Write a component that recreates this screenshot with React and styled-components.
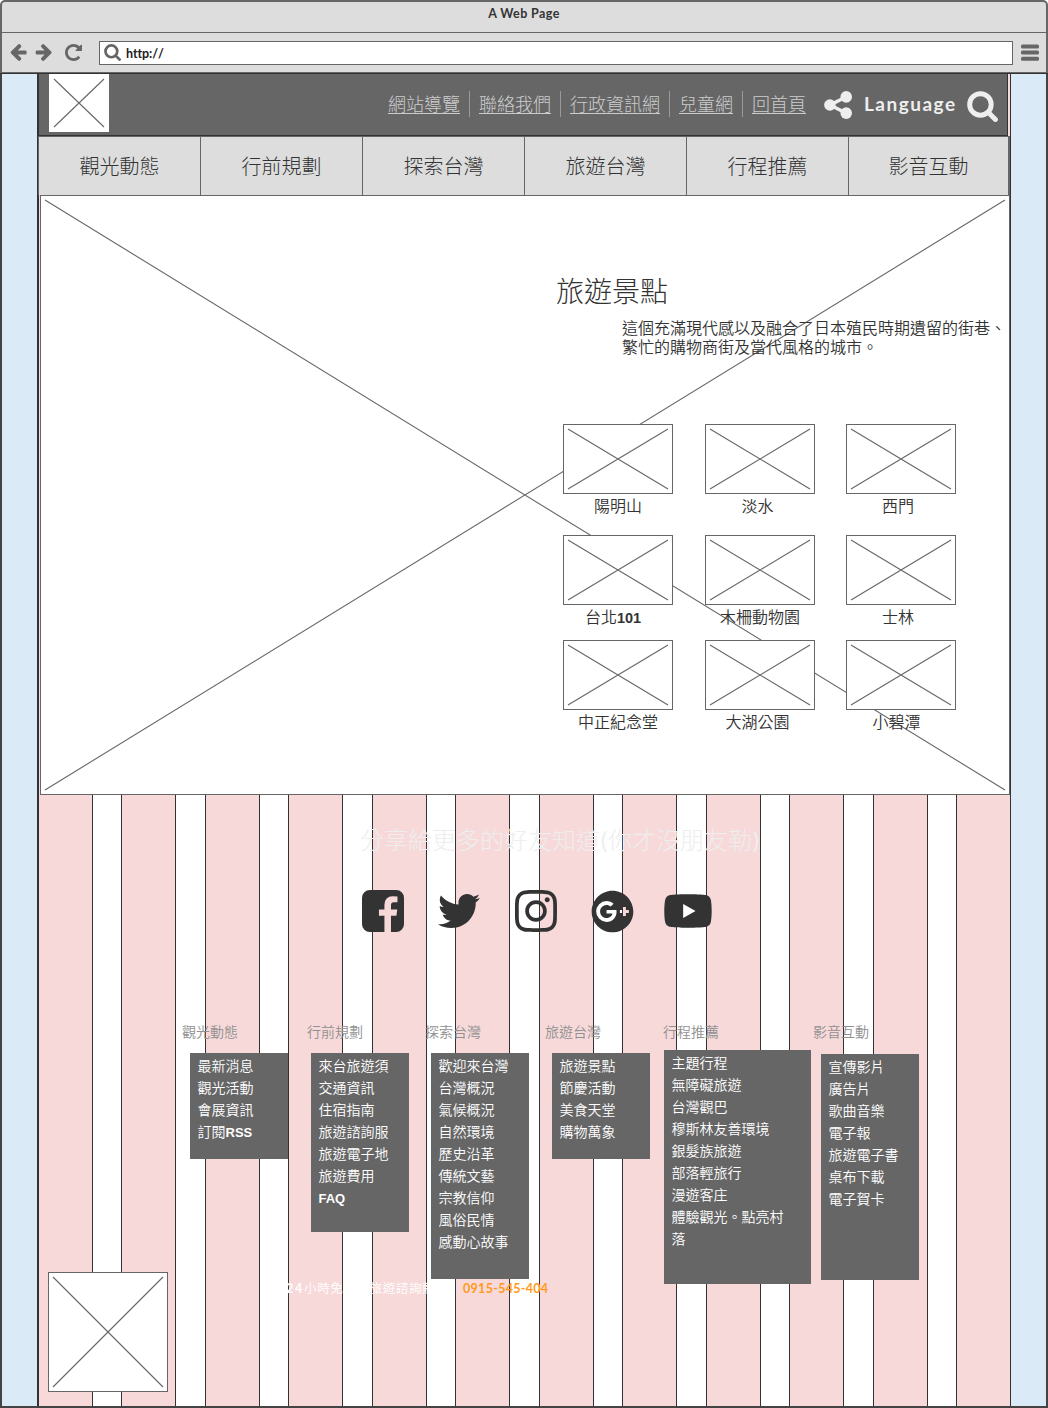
import React from 'react';
import styled, { createGlobalStyle } from 'styled-components';
import { FaTwitter, FaInstagram, FaGooglePlus, FaYoutube } from 'react-icons/fa';

const GlobalStyle = createGlobalStyle`
  * { box-sizing: border-box; }
  body {
    margin: 0;
    background: #fff;
    font-family: Lato, "Noto Sans CJK TC", sans-serif;
    font-weight: 300;
    color: #333;
  }
`;

const Window = styled.div`
  width: 1048px;
  height: 1408px;
  display: flex;
  flex-direction: column;
  overflow: hidden;
`;

const Chrome = styled.header`
  flex: none;
  height: 73px;
  background: #ddd;
  border: 2px solid #666;
  border-bottom-width: 1px;
  border-radius: 5px 5px 0 0;
`;

const TitleBar = styled.div`
  height: 31px;
  padding-top: 3px;
  border-bottom: 1px solid #666;
  text-align: center;
  font-size: 12.5px;
  line-height: 18px;
  font-weight: 700;
  letter-spacing: 0.4px;
`;

const Toolbar = styled.div`
  height: 39px;
  display: flex;
  align-items: center;
  padding: 0 7px 0 8px;
  color: #666;
`;

const ToolButton = styled.span`
  display: flex;
  margin-right: ${(p) => p.$after}px;
`;

const AddressBar = styled.div`
  flex: 1;
  height: 24px;
  display: flex;
  align-items: center;
  gap: 5px;
  padding-left: 4px;
  margin-right: 8px;
  background: #fff;
  border: 1px solid #666;
`;

const Address = styled.span`
  padding-top: 1px;
  color: #222;
  font-size: 12.5px;
  font-weight: 700;
  letter-spacing: -0.1px;
  font-kerning: none;
`;

const Viewport = styled.div`
  flex: 1;
  display: grid;
  grid-template-columns: 37px 974px 37px;
  border-top: 1px solid #333;
  border-bottom: 2px solid #444;
`;

const Gutter = styled.aside`
  background: #daeaf6;
  border-left: ${(p) => (p.$side === 'left' ? '2px solid #444' : '0')};
  border-right: ${(p) => (p.$side === 'right' ? '2px solid #444' : '0')};
`;

const Site = styled.div`
  display: grid;
  border-left: 2px solid #333;
`;

const Stripes = styled.div`
  grid-area: 1 / 1;
  display: flex;
  justify-content: space-between;
  margin-left: -1px;
`;

const Stripe = styled.i`
  width: 55px;
  background: #f7d9da;
  border: solid #333;
  border-width: 0 1px;
`;

const Page = styled.div`
  grid-area: 1 / 1;
  position: relative;
  display: flex;
  flex-direction: column;
`;

const Header = styled.div`
  height: 62px;
  width: 969px;
  flex: none;
  display: flex;
  padding-left: 10px;
  background: #666;
  border: solid #333;
  border-width: 0 1px 1px 0;
  color: #eee;
`;

const LinkList = styled.nav`
  display: flex;
  align-items: center;
  height: 26px;
  margin: 17px 0 0 270px;
  font-size: 18px;
`;

const TopLink = styled.a`
  padding: 0 9px;
  line-height: 27px;
  height: 26px;
  color: #ccc;
  text-decoration: underline;
  text-decoration-thickness: 1px;
  text-underline-offset: 2px;
  & + & {
    border-left: 1px solid #999;
  }
`;

const HeaderTools = styled.div`
  display: flex;
  align-items: flex-start;
  padding: 17px 0 0 9px;
  white-space: nowrap;
`;

const Language = styled.span`
  width: 115px;
  padding-left: 12px;
  font-size: 19px;
  line-height: 25px;
  font-weight: 700;
  letter-spacing: 1.5px;
`;

const MainNav = styled.nav`
  flex: none;
  height: 59px;
  width: 972px;
  margin-left: -1px;
  display: grid;
  grid-template-columns: repeat(6, 162px);
  border-top: 1px solid #666;
  background: #ddd;
`;

const NavItem = styled.a`
  border-left: 1px solid #666;
  text-align: center;
  font-size: 20px;
  line-height: 58px;
  &:last-child {
    border-right: 2px solid #666;
  }
`;

const HeroBox = styled.main`
  margin: 0 0 0 1px;
  flex: none;
  height: 600px;
`;

const Frame = styled.div`
  width: ${(p) => p.$w}px;
  height: ${(p) => p.$h}px;
  flex: none;
  display: grid;
  background: #fff;
  border: 1px solid ${(p) => p.$edge || '#666'};
`;

const Cross = styled.svg`
  grid-area: 1 / 1;
  display: block;
  margin: 4px;
  stroke: #666;
  stroke-width: 1.1;
  overflow: visible;
`;

const HeroContent = styled.div`
  grid-area: 1 / 1;
  position: relative;
  padding: 74px 0 0 515px;
`;

const HeroTitle = styled.h1`
  margin: 0;
  font-size: 28px;
  line-height: 42px;
  font-weight: 300;
`;

const HeroText = styled.p`
  margin: 6px 0 0 66px;
  width: 387px;
  font-size: 16px;
  line-height: 19px;
  font-weight: 350;
`;

const Spots = styled.div`
  display: grid;
  grid-template-columns: 142px 141px 110px;
  grid-template-rows: 111px 105px 100px;
  margin: 68px 0 0 7px;
`;

const Spot = styled.figure`
  width: 110px;
  margin: 0;
`;

const SpotName = styled.figcaption`
  padding-right: ${(p) => p.$shift * 2}px;
  text-align: center;
  font-size: 16px;
  line-height: 24px;
  font-weight: 350;
  b { font: 700 14.5px "Liberation Sans", sans-serif; }
`;

const ShareTitle = styled.h2`
  margin: 27px 0 0 321px;
  font-size: 24px;
  line-height: 36px;
  font-weight: 300;
  color: #eee;
  white-space: nowrap;
  b { font-weight: 400; padding: 0 0.8px; }
`;

const SocialRow = styled.div`
  display: flex;
  align-items: center;
  height: 48px;
  margin: 29px 0 0 320px;
  color: #333;
`;

const Social = styled.a`
  display: flex;
  justify-content: center;
  width: ${(p) => p.$w}px;
`;

const Sitemap = styled.div`
  display: grid;
  grid-template-columns: 125px 118px 120px 118px 150px 108px;
  height: 251px;
  flex: none;
  margin: 86px 0 0 143px;
`;

const GroupTitle = styled.h3`
  margin: 0;
  height: 22px;
  font-size: 14px;
  line-height: 22px;
  font-weight: 350;
  color: #909090;
`;

const LinkPanel = styled.ul`
  list-style: none;
  margin: ${(p) => p.$top}px 0 0 ${(p) => p.$left}px;
  padding: 2px 18px 0 7.5px;
  width: ${(p) => p.$w}px;
  height: ${(p) => p.$h}px;
  background: #666;
  color: #fff;
  font-size: 14px;
  line-height: 22px;
  font-weight: 350;
  b { font: 700 13px "Liberation Sans", sans-serif; }
`;

const BottomRow = styled.div`
  display: flex;
  align-items: flex-start;
  padding-left: 9px;
`;

const Hotline = styled.p`
  display: flex;
  margin: 7px 0 0 118px;
  color: #fff;
  font-size: 12.5px;
  line-height: 20px;
  letter-spacing: 0.6px;
  font-weight: 350;
  white-space: pre;
  b { font-weight: 700; letter-spacing: 1.8px; }
`;

const HotlineLabel = styled.span`
  width: 177px;
`;

const Phone = styled.span`
  color: #ff9a1a;
  font-weight: 700;
  letter-spacing: 0.3px;
`;

function Placeholder({ w, h, edge, children }) {
  const cw = w - 10;
  const ch = h - 10;
  return (
    <Frame $w={w} $h={h} $edge={edge}>
      <Cross width={cw} height={ch} viewBox={`0 0 ${cw} ${ch}`}>
        <path d={`M0 0L${cw} ${ch}M${cw} 0L0 ${ch}`} />
      </Cross>
      {children}
    </Frame>
  );
}

function SearchIcon({ size }) {
  return (
    <svg width={size} height={size} viewBox="0 0 30 30" fill="none" stroke="currentColor" strokeWidth="4.8" strokeLinecap="round">
      <circle cx="13" cy="13" r="10.4" />
      <path d="M20.5 20.5L27.5 27.5" />
    </svg>
  );
}

function ShareIcon() {
  return (
    <svg width="28" height="28" viewBox="0 0 28 28" fill="currentColor">
      <path d="M22 6L6 14L22 22" fill="none" stroke="currentColor" strokeWidth="3.6" />
      <circle cx="22.2" cy="5.9" r="5.8" />
      <circle cx="22.2" cy="22.1" r="5.8" />
      <circle cx="5.9" cy="14" r="5.8" />
    </svg>
  );
}

function MenuIcon() {
  return (
    <svg width="18" height="17" viewBox="0 0 18 17" fill="currentColor">
      <rect y="0.4" width="18" height="4" rx="1.5" />
      <rect y="6.6" width="18" height="4" rx="1.5" />
      <rect y="12.8" width="18" height="4" rx="1.5" />
    </svg>
  );
}

const arrowPath =
  'M1664 896v128q0 53-32.5 90.5t-84.5 37.5h-704l293 294q38 36 38 90t-38 90l-75 76q-37 37-90 37-52 0-91-37l-651-652q-37-37-37-90 0-52 37-91l651-650q38-38 91-38 52 0 90 38l75 74q38 38 38 91t-38 91l-293 293h704q52 0 84.5 37.5t32.5 90.5z';

function ArrowIcon({ forward }) {
  return (
    <svg width="17" height="17" viewBox="128 180 1572 1560" fill="currentColor">
      <path d={arrowPath} transform={forward ? 'translate(1856 0) scale(-1 1)' : undefined} />
    </svg>
  );
}

function ReloadIcon() {
  return (
    <svg width="17" height="17" viewBox="128 128 1536 1536" fill="currentColor">
      <path d="M1664 256v448q0 26-19 45t-45 19h-448q-42 0-59-40-17-39 14-69l138-138q-148-137-349-137-104 0-198.5 40.5t-163.5 109.5-109.5 163.5-40.5 198.5 40.5 198.5 109.5 163.5 163.5 109.5 198.5 40.5q119 0 225-52t179-147q7-10 23-12 15 0 25 9l137 138q9 8 9.5 20.5t-7.5 22.5q-109 132-264 204.5t-327 72.5q-156 0-298-61t-245-164-164-245-61-298 61-298 164-245 245-164 298-61q147 0 284.5 55.5t244.5 156.5l130-129q29-31 70-14 39 17 39 59z" />
    </svg>
  );
}

function FacebookIcon() {
  return (
    <svg width="42" height="42" viewBox="0 128 1536 1536" fill="currentColor">
      <path d="M1248 128q119 0 203.5 84.5t84.5 203.5v960q0 119-84.5 203.5t-203.5 84.5h-188v-595h199l30-232h-229v-148q0-56 23.5-84t91.5-28l122-1v-207q-63-9-178-9-136 0-217.5 80t-81.5 226v171h-200v232h200v595h-532q-119 0-203.5-84.5t-84.5-203.5v-960q0-119 84.5-203.5t203.5-84.5h960z" />
    </svg>
  );
}

const topLinks = ['網站導覽', '聯絡我們', '行政資訊網', '兒童網', '回首頁'];
const navItems = ['觀光動態', '行前規劃', '探索台灣', '旅遊台灣', '行程推薦', '影音互動'];

const spots = [
  ['陽明山', 0],
  ['淡水', 2.5],
  ['西門', 3],
  [<>台北<b>101</b></>, 5],
  ['木柵動物園', 0],
  ['士林', 3],
  ['中正紀念堂', 0],
  ['大湖公園', 2.5],
  ['小碧潭', 4.5],
];

const groups = [
  { title: '觀光動態', left: 8, top: 10, w: 98, h: 106, items: ['最新消息', '觀光活動', '會展資訊', <>訂閱<b>RSS</b></>] },
  { title: '行前規劃', left: 4, top: 10, w: 98, h: 179, items: ['來台旅遊須', '交通資訊', '住宿指南', '旅遊諮詢服', '旅遊電子地', '旅遊費用', <b>FAQ</b>] },
  { title: '探索台灣', left: 6, top: 10, w: 98, h: 226, items: ['歡迎來台灣', '台灣概況', '氣候概況', '自然環境', '歷史沿革', '傳統文藝', '宗教信仰', '風俗民情', '感動心故事'] },
  { title: '旅遊台灣', left: 7, top: 10, w: 98, h: 106, items: ['旅遊景點', '節慶活動', '美食天堂', '購物萬象'] },
  { title: '行程推薦', left: 1, top: 7, w: 147, h: 234, items: ['主題行程', '無障礙旅遊', '台灣觀巴', '穆斯林友善環境', '銀髮族旅遊', '部落輕旅行', '漫遊客庄', '體驗觀光。點亮村落'] },
  { title: '影音互動', left: 8, top: 11, w: 98, h: 226, items: ['宣傳影片', '廣告片', '歌曲音樂', '電子報', '旅遊電子書', '桌布下載', '電子賀卡'] },
];

export default function App() {
  return (
    <Window>
      <GlobalStyle />
      <Chrome>
        <TitleBar>A Web Page</TitleBar>
        <Toolbar>
          <ToolButton $after={8}><ArrowIcon /></ToolButton>
          <ToolButton $after={13}><ArrowIcon forward /></ToolButton>
          <ToolButton $after={17}><ReloadIcon /></ToolButton>
          <AddressBar>
            <SearchIcon size={17} />
            <Address>http://</Address>
          </AddressBar>
          <MenuIcon />
        </Toolbar>
      </Chrome>
      <Viewport>
        <Gutter $side="left" />
        <Site>
          <Stripes>
            {Array.from({ length: 12 }, (_, i) => <Stripe key={i} />)}
          </Stripes>
          <Page>
            <Header>
              <Placeholder w={60} h={58} edge="#fff" />
              <LinkList>
                {topLinks.map((t) => <TopLink key={t}>{t}</TopLink>)}
              </LinkList>
              <HeaderTools>
                <ShareIcon />
                <Language>Language</Language>
                <SearchIcon size={31} />
              </HeaderTools>
            </Header>
            <MainNav>
              {navItems.map((t) => <NavItem key={t}>{t}</NavItem>)}
            </MainNav>
            <HeroBox>
              <Placeholder w={970} h={600}>
                <HeroContent>
                  <HeroTitle>旅遊景點</HeroTitle>
                  <HeroText>這個充滿現代感以及融合了日本殖民時期遺留的街巷、繁忙的購物商街及當代風格的城市。</HeroText>
                  <Spots>
                    {spots.map(([name, shift], i) => (
                      <Spot key={i}>
                        <Placeholder w={110} h={70} />
                        <SpotName $shift={shift}>{name}</SpotName>
                      </Spot>
                    ))}
                  </Spots>
                </HeroContent>
              </Placeholder>
            </HeroBox>
            <ShareTitle>分享給更多的好友知道<b>(</b>你才沒朋友勒<b>)</b></ShareTitle>
            <SocialRow>
              <Social $w={48}><FacebookIcon /></Social>
              <Social $w={104}><FaTwitter size={42} /></Social>
              <Social $w={50}><FaInstagram size={48} /></Social>
              <Social $w={102}><FaGooglePlus size={43} /></Social>
              <Social $w={50}><FaYoutube size={54} /></Social>
            </SocialRow>
            <Sitemap>
              {groups.map((g) => (
                <section key={g.title}>
                  <GroupTitle>{g.title}</GroupTitle>
                  <LinkPanel $left={g.left} $top={g.top} $w={g.w} $h={g.h}>
                    {g.items.map((item, i) => <li key={i}>{item}</li>)}
                  </LinkPanel>
                </section>
              ))}
            </Sitemap>
            <BottomRow>
              <Placeholder w={120} h={120} />
              <Hotline>
                <HotlineLabel><b>24</b>小時免付費旅遊諮詢熱線</HotlineLabel>
                <Phone>0915-545-404</Phone>
              </Hotline>
            </BottomRow>
          </Page>
        </Site>
        <Gutter $side="right" />
      </Viewport>
    </Window>
  );
}
